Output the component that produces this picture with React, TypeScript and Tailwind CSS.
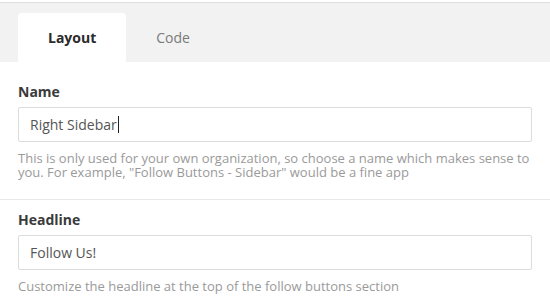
import React from "react"

const tabs = ["Layout", "Code"]

function Field({
  label,
  value,
  help,
  caret,
}: {
  label: string
  value: string
  help: string
  caret?: boolean
}) {
  return (
    <>
      <div className="text-[14px] font-bold leading-[20px] text-[#3a3a3a]">{label}</div>
      <div className="mt-[5px] flex h-[35px] items-center rounded-[2px] border border-[#dcdcdc] bg-white px-[11px] text-[14px] text-[#555]">
        <span>{value}</span>
        {caret && <span className="ml-px inline-block h-[17px] w-px bg-[#222]" />}
      </div>
      <p className="mt-[9px] text-[13px] leading-[14px] text-[#9a9a9a]">{help}</p>
    </>
  )
}

export default function App() {
  return (
    <div className="h-[308px] w-[550px] overflow-hidden bg-white font-['Open_Sans',sans-serif]">
      <div className="mt-[2px] flex h-[60px] items-end border-t border-[#dedede] bg-[#f2f2f2] pl-[18px]">
        {tabs.map((tab, i) => (
          <div
            key={tab}
            className={
              i === 0
                ? "flex h-[49px] items-center rounded-t-[4px] bg-white px-[30px] text-[14px] font-bold text-[#2b2b2b]"
                : "flex h-[49px] items-center px-[30px] text-[14px] text-[#7a7a7a]"
            }
          >
            {tab}
          </div>
        ))}
      </div>

      <div className="border-b border-[#e8e8e8] px-[18px] pb-[20px] pt-[20px]">
        <Field
          label="Name"
          value="Right Sidebar"
          caret
          help={'This is only used for your own organization, so choose a name which makes sense to you. For example, "Follow Buttons - Sidebar" would be a fine app'}
        />
      </div>

      <div className="px-[18px] pt-[10px]">
        <Field
          label="Headline"
          value="Follow Us!"
          help="Customize the headline at the top of the follow buttons section"
        />
      </div>
    </div>
  )
}
